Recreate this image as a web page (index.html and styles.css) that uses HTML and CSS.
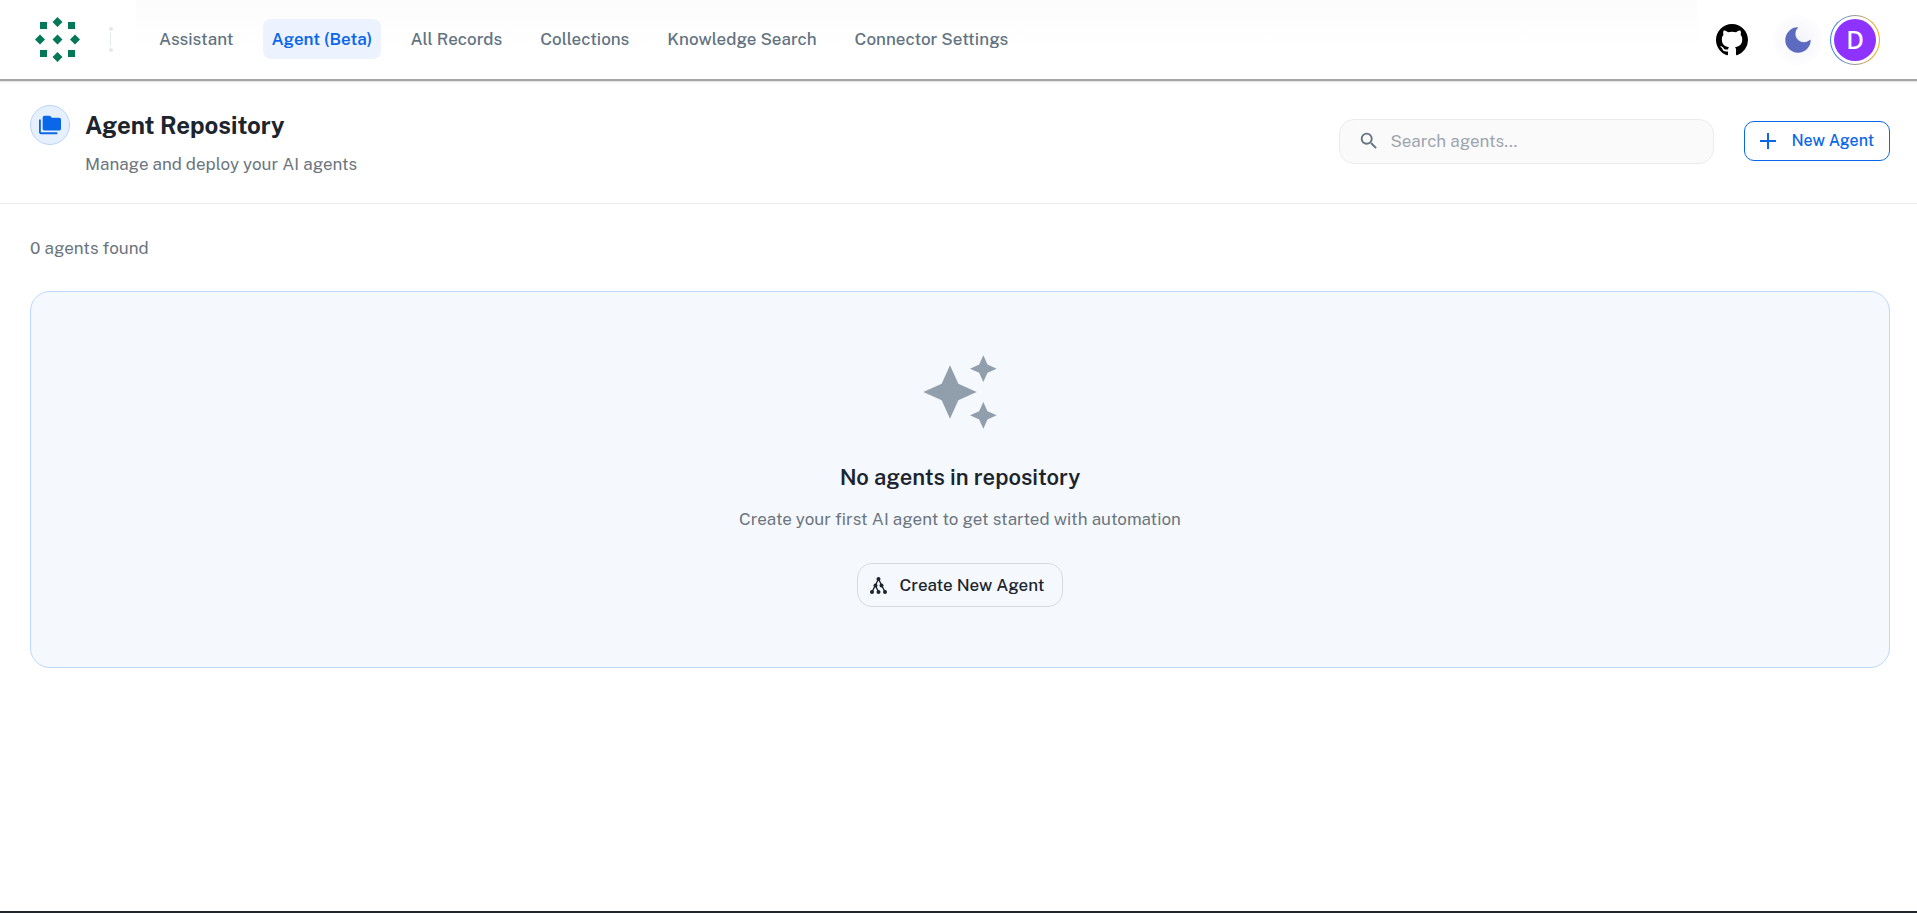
FILE: index.html
```
<!DOCTYPE html>
<html lang="en">
<head>
    <meta charset="UTF-8">
    <meta name="viewport" content="width=device-width, initial-scale=1">
    <title>Agent Repository</title>
    <link rel="stylesheet" href="styles.css">
</head>
<body>
    <header class="topbar">
        <a class="logo" href="#" aria-label="Home">
            <svg viewBox="0 0 45 45" width="45" height="45" fill="#047857">
                <path d="M22.500 0l5 5-5 5-5-5zM22.500 17.500l5 5-5 5-5-5zM22.500 35l5 5-5 5-5-5zM5 17.500l5 5-5 5-5-5zM40 17.500l5 5-5 5-5-5z"/>
                <path d="M5 5h7v7H5zM33 5h7v7h-7zM5 33h7v7H5zM33 33h7v7h-7z"/>
            </svg>
        </a>
        <span class="divider"></span>
        <nav class="nav">
            <a class="nav-item" href="#">Assistant</a>
            <a class="nav-item active" href="#">Agent (Beta)</a>
            <a class="nav-item" href="#">All Records</a>
            <a class="nav-item" href="#">Collections</a>
            <a class="nav-item" href="#">Knowledge Search</a>
            <a class="nav-item" href="#">Connector Settings</a>
        </nav>
        <div class="actions">
            <a class="github" href="#" aria-label="GitHub">
                <svg viewBox="0 0 16 16" width="32" height="32" fill="#000">
                    <path d="M8 0C3.58 0 0 3.58 0 8c0 3.54 2.29 6.53 5.47 7.59.4.07.55-.17.55-.38 0-.19-.01-.82-.01-1.49-2.01.37-2.53-.49-2.69-.94-.09-.23-.48-.94-.82-1.13-.28-.15-.68-.52-.01-.53.63-.01 1.08.58 1.23.82.72 1.21 1.87.87 2.33.66.07-.52.28-.87.51-1.07-1.78-.2-3.64-.89-3.64-3.95 0-.87.31-1.59.82-2.15-.08-.2-.36-1.02.08-2.12 0 0 .67-.21 2.2.82.64-.18 1.32-.27 2-.27s1.36.09 2 .27c1.53-1.04 2.2-.82 2.2-.82.44 1.1.16 1.92.08 2.12.51.56.82 1.27.82 2.15 0 3.07-1.87 3.75-3.65 3.95.29.25.54.73.54 1.48 0 1.07-.01 1.93-.01 2.2 0 .21.15.46.55.38A8.01 8.01 0 0 0 16 8c0-4.42-3.58-8-8-8z"/>
                </svg>
            </a>
            <button class="theme" type="button" aria-label="Dark mode">
                <svg viewBox="0 0 26 26" width="26" height="26" fill="#5c6bc0">
                    <path d="M12.500 .3A12.700 12.700 0 1 0 25.700 13.500Q25.400 12.300 24.400 13.200A8.500 8.500 0 0 1 11.500 2.500Q13.800 .6 12.500 .3z"/>
                </svg>
            </button>
            <button class="avatar" type="button" aria-label="Account"><span class="avatar-letter">D</span></button>
        </div>
    </header>

    <section class="page-head">
        <span class="page-icon">
            <svg viewBox="0 0 24 24" width="22" height="22" fill="#0b67ea">
                <path d="M22 4h-8l-2-2H6c-1.100 0-1.990.9-1.990 2L4 16c0 1.100.9 2 2 2h16c1.100 0 2-.9 2-2V6c0-1.100-.9-2-2-2zM2 6H0v14c0 1.100.9 2 2 2h18v-2H2z"/>
            </svg>
        </span>
        <div class="page-title">
            <h1 class="title">Agent Repository</h1>
            <p class="subtitle">Manage and deploy your AI agents</p>
        </div>
        <label class="search">
            <svg viewBox="0 0 24 24" width="22" height="22" fill="#637381">
                <path d="M15.500 14h-.79l-.28-.27A6.470 6.470 0 0 0 16 9.500 6.500 6.500 0 1 0 9.500 16c1.610 0 3.090-.59 4.230-1.570l.27.28v.79l5 4.990L20.490 19zm-6 0C7.010 14 5 11.990 5 9.500S7.010 5 9.500 5 14 7.010 14 9.500 11.990 14 9.500 14"/>
            </svg>
            <input class="search-input" type="text" placeholder="Search agents..." aria-label="Search agents">
        </label>
        <button class="new-agent" type="button">
            <svg viewBox="0 0 16 16" width="16" height="16" fill="#0b67ea">
                <path d="M7 0h2v7h7v2H9v7H7V9H0V7h7z"/>
            </svg>
            New Agent
        </button>
    </section>

    <main class="content">
        <p class="count">0 agents found</p>
        <div class="empty">
            <svg class="empty-icon" viewBox="0 0 24 24" width="80" height="80" fill="#919eab">
                <path d="m19 9 1.250-2.750L23 5l-2.750-1.250L19 1l-1.250 2.750L15 5l2.750 1.250zM19 15l-1.250 2.750L15 19l2.750 1.250L19 23l1.250-2.750L23 19l-2.750-1.250zM11.500 9.500 9 4 6.500 9.500 1 12l5.500 2.500L9 20l2.500-5.500L17 12z"/>
            </svg>
            <h2 class="empty-title">No agents in repository</h2>
            <p class="empty-text">Create your first AI agent to get started with automation</p>
            <button class="create" type="button">
                <svg viewBox="0 0 17 17" width="17" height="17" fill="#1c252e" stroke="#1c252e">
                    <path d="M8.500 2L2 15M8.500 2L15 15M5.500 8.500L8.500 15" fill="none" stroke-width="1.400"/>
                    <g stroke="none">
                        <circle cx="8.500" cy="2" r="2"/>
                        <circle cx="5.500" cy="8.500" r="2"/>
                        <circle cx="11.500" cy="8.500" r="2"/>
                        <circle cx="2" cy="15" r="2"/>
                        <circle cx="8.500" cy="15" r="2"/>
                        <circle cx="15" cy="15" r="2"/>
                    </g>
                </svg>
                Create New Agent
            </button>
        </div>
    </main>
    <footer class="bottom-line"></footer>
</body>
</html>
```
FILE: styles.css
```
* {
    margin: 0;
    padding: 0;
    box-sizing: border-box;
}
body {
    display: flex;
    flex-direction: column;
    min-height: 100vh;
    background-color: #fff;
    color: #1c252e;
    font-family: "Public Sans", Inter, "Liberation Sans", sans-serif;
    font-size: 17px;
    line-height: 26px;
}
button,
input {
    font: inherit;
}
button {
    cursor: pointer;
}
a {
    color: inherit;
    text-decoration: none;
}
svg {
    display: block;
    flex: none;
}

/* top bar */
.topbar {
    display: flex;
    align-items: center;
    height: 81px;
    padding: 0 37px 0 35px;
    border-bottom: 2px solid #a6a6a6;
    background: linear-gradient(#fcfcfc, #fff 60%) 136px 0 / calc(100% - 356px) 100% no-repeat;
    box-shadow: 0 1px 1px #e4e4e4;
}
.divider {
    position: relative;
    width: 1px;
    height: 13px;
    margin: 0 39px 0 30px;
    background-color: #e5e8eb;
}
.divider:before,
.divider:after {
    content: '';
    position: absolute;
    left: -1px;
    width: 4px;
    height: 4px;
    border-radius: 50%;
    background-color: #e5e8eb;
}
.divider:before {
    top: -6px;
}
.divider:after {
    bottom: -6px;
}
.nav {
    display: flex;
    gap: 20px;
    margin-bottom: 1px;
}
.nav-item {
    padding: 7px 9px;
    border-radius: 8px;
    color: #637381;
    font-weight: 500;
    white-space: nowrap;
}
.nav-item.active {
    background-color: #ecf3fe;
    color: #0b67ea;
    font-weight: 600;
}
.actions {
    display: flex;
    align-items: center;
    margin-left: auto;
}
.theme {
    display: flex;
    align-items: center;
    justify-content: center;
    width: 50px;
    height: 50px;
    margin: 0 7px 0 25px;
    border: 0;
    border-radius: 50%;
    background: radial-gradient(circle, #f3f4fb, #fdfdfe 70%);
}
.avatar {
    width: 50px;
    height: 50px;
    padding: 3px;
    border: 1px solid transparent;
    border-radius: 50%;
    background: linear-gradient(#fff, #fff) padding-box, linear-gradient(90deg, #2b7fe0, #999 50%, #ffab00) border-box;
}
.avatar-letter {
    display: block;
    border-radius: 50%;
    background-color: #8e33ff;
    color: #fff;
    font-size: 25px;
    font-weight: 500;
    line-height: 42px;
}

/* page header */
.page-head {
    display: flex;
    align-items: center;
    padding: 24px 27px 26px 30px;
    border-bottom: 1px solid #ededed;
}
.page-icon {
    display: flex;
    align-items: center;
    justify-content: center;
    align-self: flex-start;
    width: 40px;
    height: 40px;
    margin-right: 15px;
    border: 1px solid #b9d4f9;
    border-radius: 50%;
    background-color: #e6f0fd;
}
.title {
    font-size: 24px;
    font-weight: 700;
    line-height: 40px;
}
.subtitle {
    margin-top: 6px;
    color: #6c757e;
}
.search {
    display: flex;
    align-items: center;
    gap: 10px;
    width: 375px;
    height: 45px;
    margin: 0 30px 0 auto;
    padding: 0 18px;
    border: 1px solid #ebebeb;
    border-radius: 15px;
    background-color: #fafafa;
}
.search-input {
    flex: 1;
    min-width: 0;
    border: 0;
    outline: 0;
    background: none;
    color: #1c252e;
}
.search-input::placeholder {
    color: #9da5ae;
}
.new-agent {
    display: flex;
    align-items: center;
    gap: 15px;
    height: 40px;
    padding: 0 15px;
    border: 1px solid #0b67ea;
    border-radius: 10px;
    background-color: #fff;
    color: #0b67ea;
    font-size: 16px;
    font-weight: 500;
    white-space: nowrap;
}

/* agents list */
.content {
    flex: 1;
    padding: 31px 27px 31px 30px;
}
.count {
    margin-bottom: 30px;
    color: #6c757e;
}
.empty {
    display: flex;
    flex-direction: column;
    align-items: center;
    padding: 60px 20px;
    border: 1px solid #bdd8fa;
    border-radius: 20px;
    background-color: #f5f9fe;
    text-align: center;
}
.empty-title {
    margin-top: 27px;
    font-size: 22px;
    font-weight: 600;
    line-height: 36px;
}
.empty-text {
    margin: 11px 0 31px;
    color: #6c757e;
}
.create {
    display: flex;
    align-items: center;
    gap: 12px;
    height: 44px;
    padding: 0 17px 0 12px;
    border: 1px solid #d7dbe0;
    border-radius: 15px;
    background: none;
    color: #1c252e;
    font-weight: 500;
}
.bottom-line {
    height: 2px;
    background-color: #20262b;
}
```
